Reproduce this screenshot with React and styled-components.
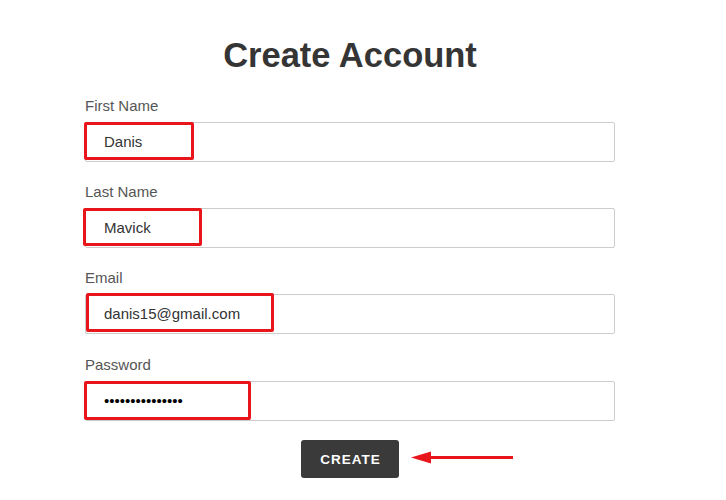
import React from "react";
import styled, { createGlobalStyle } from "styled-components";

const GlobalStyle = createGlobalStyle`
  html, body { margin: 0; padding: 0; background: #ffffff; }
  body { font-family: "Liberation Sans", Arial, Helvetica, sans-serif; }
  * { box-sizing: border-box; }
`;

const Page = styled.div`
  width: 726px;
  height: 500px;
  padding: 35px 0 0 85px;
`;

const Form = styled.form`
  width: 530px;
  display: flex;
  flex-direction: column;
`;

const Title = styled.h1`
  margin: 0 0 21px;
  font-size: 34.5px;
  line-height: 40px;
  font-weight: 700;
  color: #353535;
  text-align: center;
`;

const Group = styled.div`
  display: flex;
  flex-direction: column;
  margin-top: ${(p) => p.$shift || 0}px;
  margin-bottom: ${(p) => 20 - (p.$shift || 0)}px;
`;

const Label = styled.label`
  display: block;
  font-size: 15px;
  line-height: 18px;
  padding-top: 1px;
  color: #555555;
  margin-bottom: 7px;
`;

const Field = styled.div`
  position: relative;
`;

const Input = styled.input`
  display: block;
  width: 100%;
  height: 40px;
  padding: 0 18px 1px;
  border: 1px solid #cccccc;
  border-radius: 2px;
  background: #fff;
  font-family: "Liberation Sans", Arial, sans-serif;
  font-size: 15px;
  color: ${(p) => (p.type === "password" ? "#000" : "#333")};
  outline: none;
`;

const Highlight = styled.span`
  position: absolute;
  left: ${(p) => p.$left}px;
  top: ${(p) => p.$top}px;
  width: ${(p) => p.$w}px;
  height: ${(p) => p.$h}px;
  border: 3px solid #e8151b;
  border-radius: 2px;
  pointer-events: none;
`;

const ButtonRow = styled.div`
  display: flex;
  justify-content: center;
`;

const ButtonWrap = styled.div`
  position: relative;
`;

const Button = styled.button`
  width: 98px;
  height: 38px;
  border: none;
  border-radius: 3px;
  background: #3a3a3a;
  color: #ffffff;
  font-family: "Liberation Sans", Arial, sans-serif;
  font-weight: 700;
  font-size: 13.5px;
  letter-spacing: 1px;
  padding: 0 0 0 1px;
  cursor: pointer;
`;

const Arrow = styled.svg`
  position: absolute;
  left: 110px;
  top: 11px;
`;

const fields = [
  { label: "First Name", type: "text", value: "Danis", hl: { left: -1, top: 0, w: 110, h: 38 } },
  { label: "Last Name", type: "text", value: "Mavick", hl: { left: -2, top: 0, w: 119, h: 38 } },
  { label: "Email", type: "text", value: "danis15@gmail.com", hl: { left: 1, top: -1, w: 188, h: 39 } },
  { label: "Password", type: "password", value: "aaaaaaaaaaaaaaa", shift: 1, hl: { left: -1, top: 0, w: 167, h: 39 } },
];

export default function App() {
  return (
    <>
      <GlobalStyle />
      <Page>
        <Form onSubmit={(e) => e.preventDefault()}>
          <Title>Create Account</Title>
          {fields.map((f) => (
            <Group key={f.label} $shift={f.shift}>
              <Label>{f.label}</Label>
              <Field>
                <Input type={f.type} value={f.value} readOnly />
                <Highlight $left={f.hl.left} $top={f.hl.top} $w={f.hl.w} $h={f.hl.h} />
              </Field>
            </Group>
          ))}
          <ButtonRow>
            <ButtonWrap>
              <Button type="submit">CREATE</Button>
              <Arrow width="104" height="14" viewBox="0 0 104 14">
                <line x1="14" y1="6.5" x2="102" y2="6.5" stroke="#e8151b" strokeWidth="3" />
                <polygon points="0,6.5 20,0.5 20,12.5" fill="#e8151b" />
              </Arrow>
            </ButtonWrap>
          </ButtonRow>
        </Form>
      </Page>
    </>
  );
}
